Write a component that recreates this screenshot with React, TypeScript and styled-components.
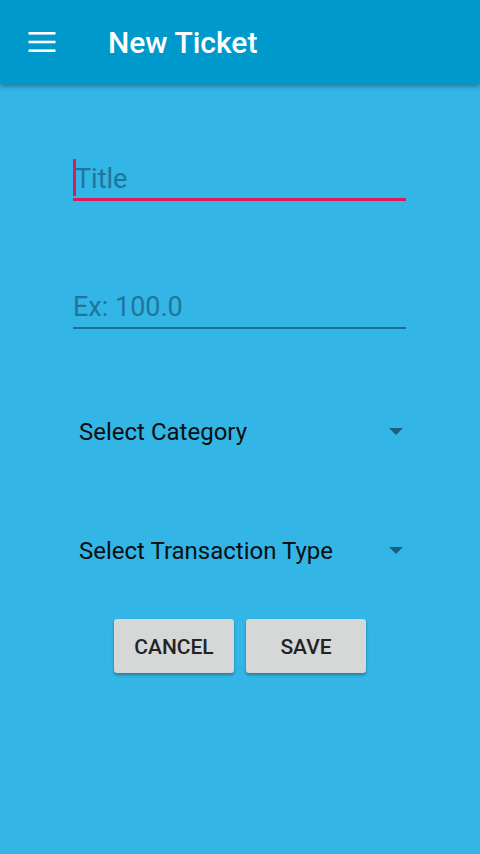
import React from "react";
import styled, { createGlobalStyle } from "styled-components";

const GlobalStyle = createGlobalStyle`
  html, body { margin: 0; padding: 0; }
  body {
    background: #33b5e5;
    font-family: Roboto, "Noto Sans", "Liberation Sans", sans-serif;
  }
  * { box-sizing: border-box; }
`;

const Screen = styled.div`
  width: 480px;
  height: 854px;
  background: #33b5e5;
  display: flex;
  flex-direction: column;
  overflow: hidden;
`;

const AppBar = styled.header`
  height: 84px;
  flex: none;
  background: #0099cc;
  display: flex;
  align-items: center;
  padding-left: 24px;
  box-shadow: 0 2px 5px rgba(0, 0, 0, 0.35);
  position: relative;
  z-index: 1;
`;

const MenuButton = styled.div`
  width: 36px;
  height: 36px;
  display: flex;
  align-items: center;
  justify-content: center;
  margin-right: 48px;
`;

const Title = styled.h1`
  margin: 0;
  color: #ffffff;
  font-size: 30px;
  font-weight: 500;
  line-height: 36px;
  padding-top: 2px;
`;

const Form = styled.main`
  display: flex;
  flex-direction: column;
  padding: 0 74px 0 73px;
`;

const EditText = styled.div<{ $focused?: boolean; $top: number }>`
  position: relative;
  margin-top: ${(p) => p.$top}px;
  padding-bottom: ${(p) => (p.$focused ? 3 : 4)}px;
  border-bottom: ${(p) => (p.$focused ? "3px solid #dc1b5e" : "2px solid #1f6f8f")};
`;

const Hint = styled.div<{ $indent?: number }>`
  font-size: 27px;
  line-height: 32px;
  color: #1f769b;
  padding-left: ${(p) => p.$indent ?? 0}px;
`;

const Caret = styled.span`
  position: absolute;
  left: 0;
  top: -4px;
  width: 3px;
  height: 37px;
  background: #dc1b5e;
`;

const Spinner = styled.div<{ $top: number }>`
  margin-top: ${(p) => p.$top}px;
  display: flex;
  align-items: center;
  justify-content: space-between;
  padding-left: 6px;
  padding-right: 3px;
`;

const SpinnerLabel = styled.span`
  font-size: 24px;
  line-height: 32px;
  color: #0c0f10;
`;

const Arrow = styled.span`
  width: 0;
  height: 0;
  border-left: 7px solid transparent;
  border-right: 7px solid transparent;
  border-top: 7px solid #1e5f7c;
  margin-top: -2px;
`;

const ButtonRow = styled.div`
  margin-top: 52px;
  display: flex;
  justify-content: center;
  gap: 12px;
  margin-left: -73px;
  margin-right: -74px;
`;

const Button = styled.button`
  width: 120px;
  height: 54px;
  border: none;
  border-radius: 3px;
  background: #d6d7d7;
  box-shadow: 0 2px 3px rgba(0, 0, 0, 0.3);
  font-family: Roboto, "Noto Sans", "Liberation Sans", sans-serif;
  font-size: 21px;
  font-weight: 500;
  color: #212324;
  padding: 0;
  padding-top: 1px;
`;

const MenuIcon = () => (
  <svg width="36" height="36" viewBox="0 0 36 36">
    <rect x="4.5" y="8" width="27" height="2.6" fill="#fff" />
    <rect x="4.5" y="16.7" width="27" height="2.6" fill="#fff" />
    <rect x="4.5" y="25.4" width="27" height="2.6" fill="#fff" />
  </svg>
);

export default function App() {
  return (
    <>
      <GlobalStyle />
      <Screen>
        <AppBar>
          <MenuButton>
            <MenuIcon />
          </MenuButton>
          <Title>New Ticket</Title>
        </AppBar>
        <Form>
          <EditText $focused $top={79}>
            <Caret />
            <Hint $indent={2}>Title</Hint>
          </EditText>
          <EditText $top={90}>
            <Hint>Ex: 100.0</Hint>
          </EditText>
          <Spinner $top={87}>
            <SpinnerLabel>Select Category</SpinnerLabel>
            <Arrow />
          </Spinner>
          <Spinner $top={87}>
            <SpinnerLabel>Select Transaction Type</SpinnerLabel>
            <Arrow />
          </Spinner>
          <ButtonRow>
            <Button>CANCEL</Button>
            <Button>SAVE</Button>
          </ButtonRow>
        </Form>
      </Screen>
    </>
  );
}
